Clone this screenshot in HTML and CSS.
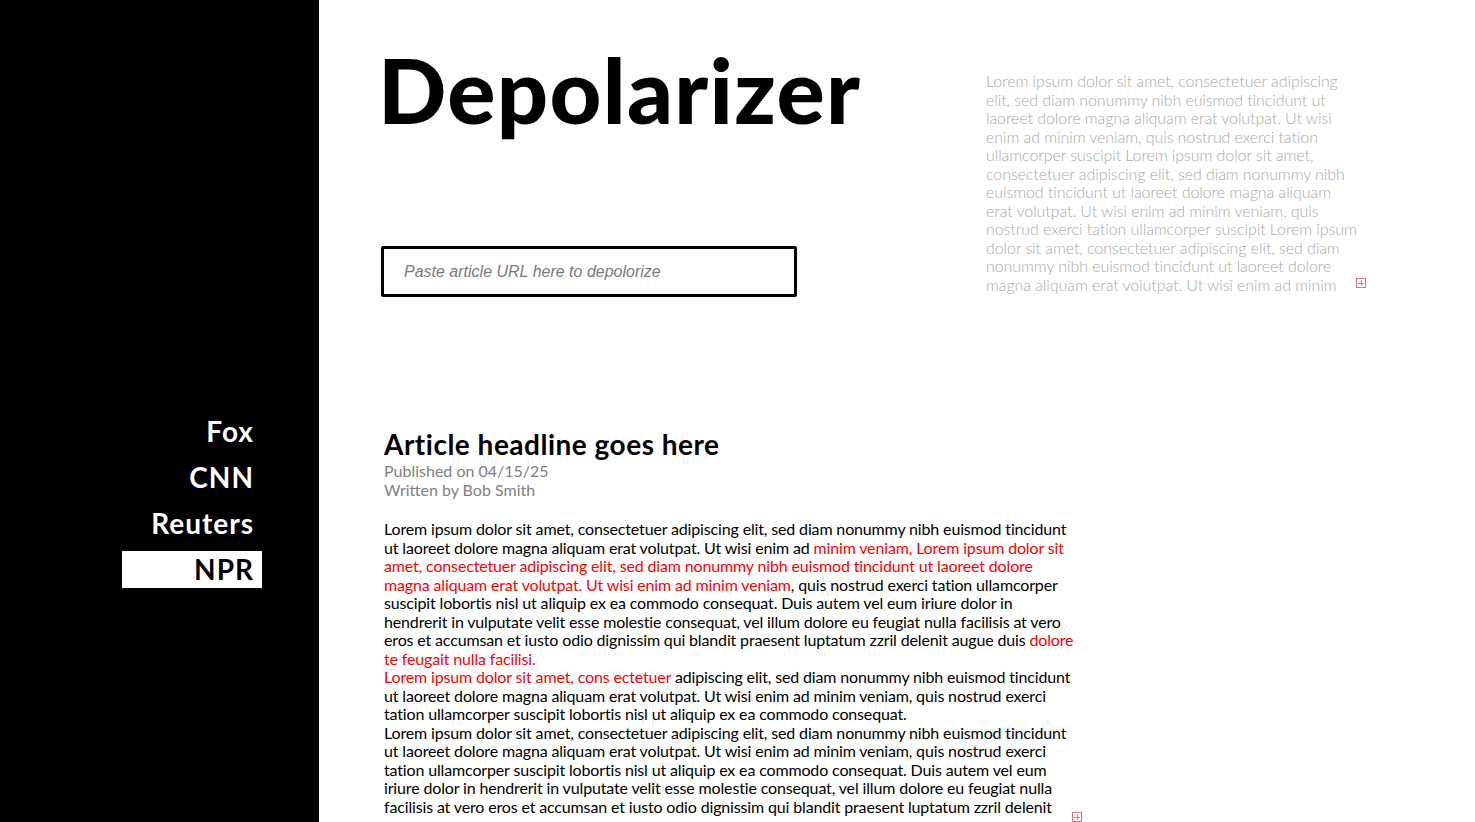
FILE: index.html
```html
<!DOCTYPE html>
<html lang="en">
<head>
<meta charset="utf-8">
<title>Depolarizer</title>
<link rel="stylesheet" href="styles.css">
</head>
<body>
<div class="app">
  <aside class="sidebar">
    <nav class="sources">
      <a class="source">Fox</a>
      <a class="source">CNN</a>
      <a class="source">Reuters</a>
      <a class="source active">NPR</a>
    </nav>
  </aside>
  <main class="main">
    <section class="hero">
      <div class="hero-left">
        <h1 class="title">Depolarizer</h1>
        <div class="url-box"><input class="url-input" type="text" placeholder="Paste article URL here to depolorize"></div>
      </div>
      <p class="intro">Lorem ipsum dolor sit amet, consectetuer adipiscing elit, sed diam nonummy nibh euismod tincidunt ut laoreet dolore magna aliquam erat volutpat. Ut wisi enim ad minim veniam, quis nostrud exerci tation ullamcorper suscipit Lorem ipsum dolor sit amet, consectetuer adipiscing elit, sed diam nonummy nibh euismod tincidunt ut laoreet dolore magna aliquam erat volutpat. Ut wisi enim ad minim veniam, quis nostrud exerci tation ullamcorper suscipit Lorem ipsum dolor sit amet, consectetuer adipiscing elit, sed diam nonummy nibh euismod tincidunt ut laoreet dolore magna aliquam erat volutpat. Ut wisi enim ad minim<span class="overflow-mark"></span></p>
    </section>
    <article class="article">
      <h2 class="headline">Article headline goes here</h2>
      <p class="meta">Published on 04/15/25<br>Written by Bob Smith</p>
      <div class="body">
        <p>Lorem ipsum dolor sit amet, consectetuer adipiscing elit, sed diam nonummy nibh euismod tincidunt ut laoreet dolore magna aliquam erat volutpat. Ut wisi enim ad <span class="hl">minim veniam, Lorem ipsum dolor sit amet, consectetuer adipiscing elit, sed diam nonummy nibh euismod tincidunt ut laoreet dolore magna aliquam erat volutpat. Ut wisi enim ad minim veniam</span>, quis nostrud exerci tation ullamcorper suscipit lobortis nisl ut aliquip ex ea commodo consequat. Duis autem vel eum iriure dolor in hendrerit in vulputate velit esse molestie consequat, vel illum dolore eu feugiat nulla facilisis at vero eros et accumsan et iusto odio dignissim qui blandit praesent luptatum zzril delenit augue duis <span class="hl">dolore te feugait nulla facilisi.</span></p>
        <p><span class="hl">Lorem ipsum dolor sit amet, cons ectetuer</span> adipiscing elit, sed diam nonummy nibh euismod tincidunt ut laoreet dolore magna aliquam erat volutpat. Ut wisi enim ad minim veniam, quis nostrud exerci tation ullamcorper suscipit lobortis nisl ut aliquip ex ea commodo consequat.</p>
        <p>Lorem ipsum dolor sit amet, consectetuer adipiscing elit, sed diam nonummy nibh euismod tincidunt ut laoreet dolore magna aliquam erat volutpat. Ut wisi enim ad minim veniam, quis nostrud exerci tation ullamcorper suscipit lobortis nisl ut aliquip ex ea commodo consequat. Duis autem vel eum iriure dolor in hendrerit in vulputate velit esse molestie consequat, vel illum dolore eu feugiat nulla facilisis at vero eros et accumsan et iusto odio dignissim qui blandit praesent luptatum zzril delenit</p>
      </div>
      <span class="overflow-mark body-mark"></span>
    </article>
  </main>
</div>
</body>
</html>
```
FILE: styles.css
```css
* { box-sizing: border-box; }
html, body { margin: 0; padding: 0; }
body {
  width: 1475px;
  height: 822px;
  overflow: hidden;
  background: #fff;
  font-family: "Lato", "Inter", sans-serif;
  color: #000;
}
.app {
  display: flex;
  height: 822px;
}
.sidebar {
  width: 319px;
  flex: none;
  background: #000;
  padding-top: 413px;
  padding-left: 122px;
}
.sources {
  display: flex;
  flex-direction: column;
  gap: 9px;
  width: 140px;
}
.source {
  display: block;
  height: 37px;
  line-height: 37px;
  text-align: right;
  padding-right: 8px;
  color: #fff;
  font-size: 28px;
  font-weight: 700;
  letter-spacing: 1px;
}
.source.active {
  background: #fff;
  color: #000;
}
.main {
  flex: 1;
  padding-left: 62px;
  position: relative;
}
.hero {
  display: flex;
  height: 410px;
}
.hero-left {
  width: 605px;
  padding-top: 39px;
}
.title {
  margin: 0 0 0 -3px;
  font-size: 90px;
  font-weight: 900;
  line-height: 100px;
  letter-spacing: 1.3px;
}
.url-box {
  margin-top: 107px;
  width: 416px;
  height: 51px;
  border: 3px solid #000;
  border-radius: 2px;
  display: flex;
  align-items: center;
  padding-left: 20px;
}
.url-input {
  border: none;
  outline: none;
  width: 100%;
  font-family: "Liberation Sans", Arial, sans-serif;
  font-size: 16px;
  font-style: italic;
  color: #000;
  background: transparent;
  padding: 0;
}
.url-input::placeholder { color: #7a7a7a; }
.intro {
  margin: 72px 0 0 0;
  width: 380px;
  height: 216px;
  padding-right: 6px;
  font-size: 16px;
  font-weight: 300;
  line-height: 18.5px;
  letter-spacing: -0.08px;
  color: #a9a9a9;
  position: relative;
}
.overflow-mark {
  position: absolute;
  width: 10px;
  height: 10px;
  border: 1px solid #f07070;
  right: 0;
  bottom: 0;
}
.overflow-mark::before, .overflow-mark::after {
  content: "";
  position: absolute;
  background: #f07070;
}
.overflow-mark::before { left: 1px; right: 1px; top: 3.5px; height: 1px; }
.overflow-mark::after { top: 1px; bottom: 1px; left: 3.5px; width: 1px; }
.article {
  position: relative;
  width: 696px;
  height: 412px;
  padding-left: 3px;
  padding-top: 17px;
}
.body-mark { right: -5px; }
.headline {
  margin: 0;
  font-size: 28px;
  font-weight: 700;
  line-height: 34px;
  letter-spacing: 0.5px;
}
.meta {
  margin: 0;
  font-size: 16px;
  line-height: 19px;
  color: #808080;
}
.body {
  margin-top: 21px;
  font-size: 16px;
  line-height: 18.5px;
  letter-spacing: -0.15px;
}
.body p { margin: 0; }
.hl { color: #ff0000; }
```
